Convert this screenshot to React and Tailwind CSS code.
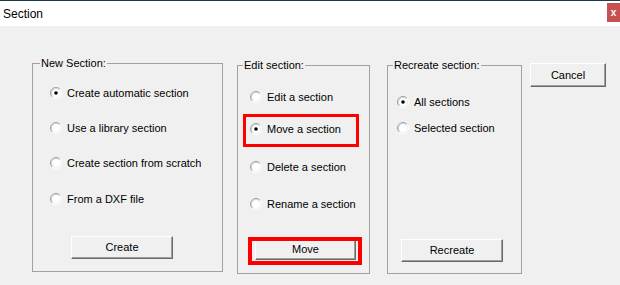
import React from "react";

const font = { fontFamily: '"Liberation Sans", Arial, sans-serif' };

function Radio({ checked }) {
  return (
    <svg width="12" height="12" viewBox="0 0 12 12" className="shrink-0">
      <circle cx="6" cy="6" r="5" fill="#ffffff" />
      <path d="M2.11 9.89 A5.5 5.5 0 0 1 9.89 2.11" fill="none" stroke="#a0a0a0" strokeWidth="1" />
      <path d="M9.89 2.11 A5.5 5.5 0 0 1 2.11 9.89" fill="none" stroke="#ffffff" strokeWidth="1" />
      <path d="M2.82 9.18 A4.5 4.5 0 0 1 9.18 2.82" fill="none" stroke="#d0d0d0" strokeWidth="1" />
      <path d="M9.18 2.82 A4.5 4.5 0 0 1 2.82 9.18" fill="none" stroke="#f0f0f0" strokeWidth="1" />
      {checked && <circle cx="6" cy="6" r="1.8" fill="#000000" />}
    </svg>
  );
}

function Option({ checked, label, className = "" }) {
  return (
    <div className={"flex items-center h-[14px] gap-[5px] " + className}>
      <Radio checked={checked} />
      <span className="text-[11px] leading-[14px] text-black whitespace-nowrap">{label}</span>
    </div>
  );
}

function WinButton({ label, className = "" }) {
  return (
    <div
      className={
        "flex items-center justify-center bg-[#f0f0f0] border border-t-white border-l-white border-r-[#696969] border-b-[#696969] shadow-[inset_-1px_-1px_0_#a0a0a0] text-[11px] text-black " +
        className
      }
    >
      {label}
    </div>
  );
}

function Group({ title, labelLeft, className = "", children }) {
  return (
    <div className={"relative border border-[#a0a0a0] flex flex-col " + className}>
      <span
        className={
          "absolute top-[-8px] px-[1px] bg-[#f0f0f0] text-[11px] leading-[14px] text-black whitespace-nowrap " +
          labelLeft
        }
      >
        {title}
      </span>
      {children}
    </div>
  );
}

export default function App() {
  return (
    <div className="w-[620px] h-[285px] bg-[#f0f0f0] flex flex-col overflow-hidden" style={font}>
      <div className="h-[1px] bg-[#1d3a4c]" />
      <div className="h-[25px] bg-white flex items-start justify-between">
        <span className="text-[12px] leading-[14px] text-black pl-[3px] pt-[6px]">Section</span>
        <div className="w-[13px] h-[19px] mt-[2px] bg-[#c75050] flex items-center justify-center text-white text-[10px] font-bold leading-none">
          x
        </div>
      </div>

      <div className="flex items-start pl-[32px]">
        <Group title="New Section:" labelLeft="left-[7px]" className="w-[191px] h-[209px] mt-[37px] pt-[22px] pb-[12px] pl-[17px]">
          <Option checked label="Create automatic section" />
          <Option label="Use a library section" className="mt-[21px]" />
          <Option label="Create section from scratch" className="mt-[21px]" />
          <Option label="From a DXF file" className="mt-[22px]" />
          <WinButton label="Create" className="mt-auto ml-[21px] w-[102px] h-[23px]" />
        </Group>

        <Group title="Edit section:" labelLeft="left-[5px]" className="w-[133px] h-[209px] mt-[39px] ml-[14px] pt-[24px] pb-[13px] pl-[12px]">
          <Option label="Edit a section" />
          <Option checked label="Move a section" className="mt-[18px]" />
          <Option label="Delete a section" className="mt-[24px]" />
          <Option label="Rename a section" className="mt-[23px]" />
          <WinButton label="Move" className="mt-auto ml-[5px] w-[101px] h-[22px]" />
          <div className="absolute left-[5px] top-[48px] w-[116px] h-[33px] border-[3px] border-[#ff0000]" />
          <div className="absolute left-[10px] top-[171px] w-[114px] h-[28px] border-[4px] border-[#ff0000]" />
        </Group>

        <Group title="Recreate section:" labelLeft="left-[5px]" className="w-[135px] h-[209px] mt-[39px] ml-[17px] pt-[29px] pb-[11px] pl-[9px]">
          <Option checked label="All sections" />
          <Option label="Selected section" className="mt-[12px]" />
          <WinButton label="Recreate" className="mt-auto ml-[4px] w-[102px] h-[23px]" />
        </Group>

        <WinButton label="Cancel" className="mt-[37px] ml-[8px] w-[76px] h-[24px]" />
      </div>
    </div>
  );
}
